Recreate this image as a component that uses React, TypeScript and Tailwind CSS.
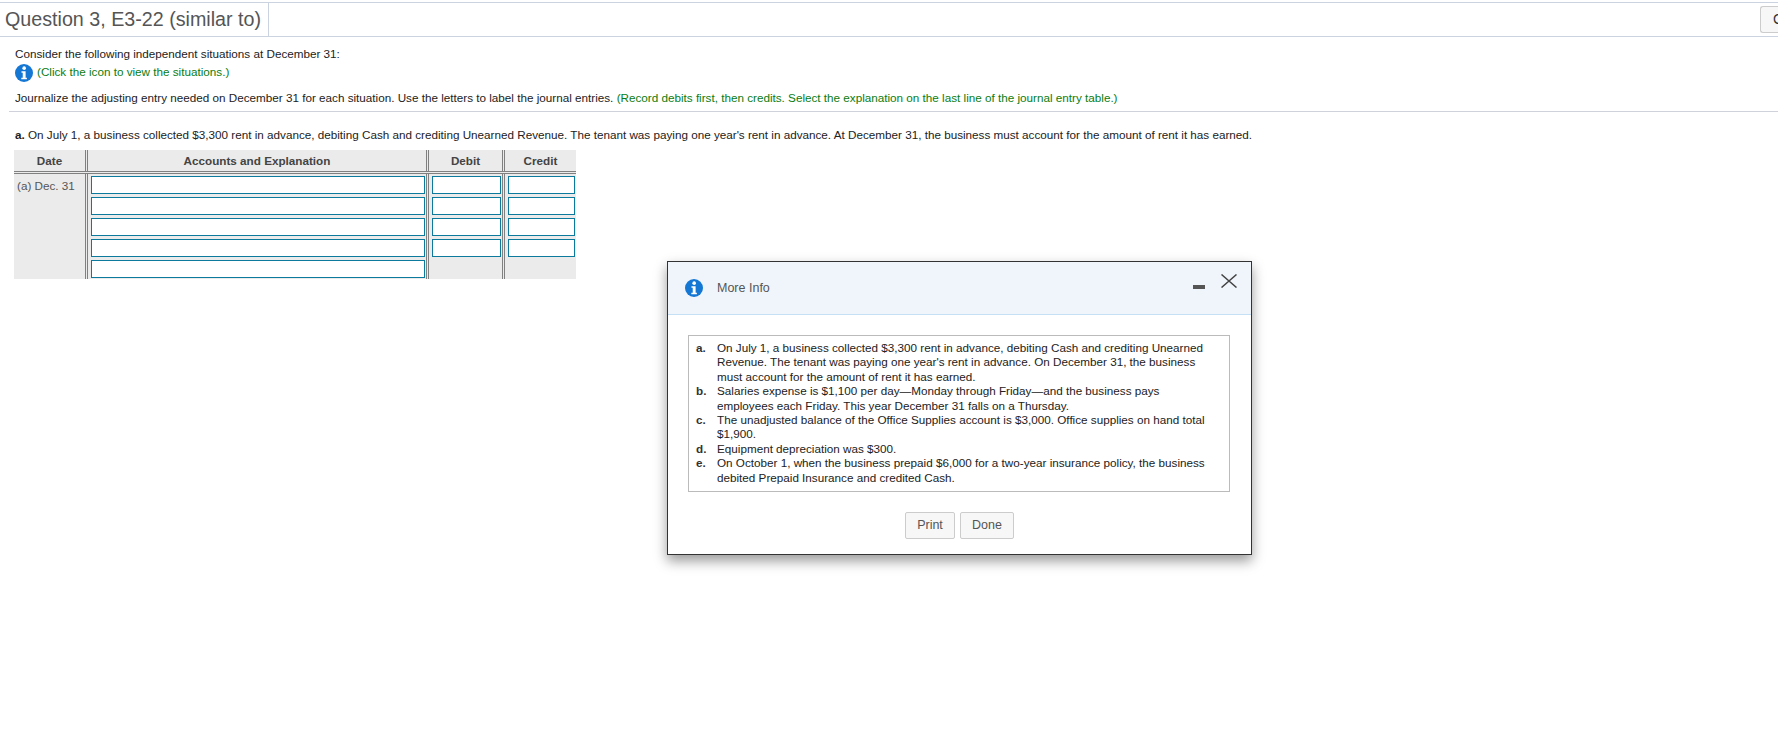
import React from 'react';

const font = { fontFamily: '"Liberation Sans", Arial, sans-serif' };

function InfoIcon({ size }: { size: number }) {
  return (
    <svg width={size} height={size} viewBox="0 0 20 20" className="shrink-0">
      <circle cx="10" cy="10" r="10" fill="#1477d4" />
      <circle cx="10.2" cy="4.6" r="2" fill="#fff" />
      <path d="M7.2 8h4.6v7.4h1.4V17H7v-1.6h1.6V9.6H7.2z" fill="#fff" />
    </svg>
  );
}

const rows = [0, 1, 2, 3, 4];

function Field({ className }: { className: string }) {
  return <div className={`h-[18px] border border-[#0b7a9c] bg-white ${className}`} />;
}

function JournalTable() {
  return (
    <div className="ml-[14px] mt-[8px] w-[562px] bg-[#ebebeb] text-[11.7px] text-[#444]">
      <div className="flex h-[24px] border-b-[3px] border-double border-[#808080] font-bold">
        <div className="flex w-[74px] items-center justify-center border-r-[3px] border-double border-[#808080]">Date</div>
        <div className="flex w-[341px] items-center justify-center border-r-[3px] border-double border-[#808080] pt-px">Accounts and Explanation</div>
        <div className="flex w-[76px] items-center justify-center border-r-[3px] border-double border-[#808080] pt-px">Debit</div>
        <div className="flex flex-1 items-center justify-center pt-px">Credit</div>
      </div>
      <div className="flex">
        <div className="w-[74px] border-r-[3px] border-double border-[#808080] pl-[3px] pt-[3px] text-[#555]">(a) Dec. 31</div>
        <div className="flex w-[341px] flex-col gap-[3px] border-r-[3px] border-double border-[#808080] pl-[3px] pt-[2px] pb-px">
          {rows.map((r) => (
            <Field key={r} className="w-[334px]" />
          ))}
        </div>
        <div className="flex w-[76px] flex-col gap-[3px] border-r-[3px] border-double border-[#808080] pl-[3px] pt-[2px]">
          {rows.slice(0, 4).map((r) => (
            <Field key={r} className="w-[69px]" />
          ))}
        </div>
        <div className="flex flex-1 flex-col gap-[3px] pl-[3px] pt-[2px]">
          {rows.slice(0, 4).map((r) => (
            <Field key={r} className="w-[67px]" />
          ))}
        </div>
      </div>
    </div>
  );
}

const info: [string, string[]][] = [
  ['a.', ['On July 1, a business collected $3,300 rent in advance, debiting Cash and crediting Unearned', "Revenue. The tenant was paying one year's rent in advance. On December 31, the business", 'must account for the amount of rent it has earned.']],
  ['b.', ['Salaries expense is $1,100 per day\u2014Monday through Friday\u2014and the business pays', 'employees each Friday. This year December 31 falls on a Thursday.']],
  ['c.', ['The unadjusted balance of the Office Supplies account is $3,000. Office supplies on hand total', '$1,900.']],
  ['d.', ['Equipment depreciation was $300.']],
  ['e.', ['On October 1, when the business prepaid $6,000 for a two-year insurance policy, the business', 'debited Prepaid Insurance and credited Cash.']],
];

function MoreInfo() {
  return (
    <div className="absolute left-[667px] top-[261px] h-[294px] w-[585px] border border-[#333] bg-white shadow-[0_6px_12px_rgba(0,0,0,0.4)]">
      <div className="flex h-[53px] items-center border-b border-[#c5e0f5] bg-[#f0f5fc] pl-[17px] pr-[14px]">
        <InfoIcon size={18} />
        <span className="ml-[14px] text-[12.5px] text-[#555]">More Info</span>
        <div className="ml-auto flex items-start self-start pt-[12px]">
          <div className="mt-[11px] h-[4px] w-[12px] bg-[#555]" />
          <svg width="16" height="14" viewBox="0 0 16 14" className="ml-[16px]">
            <path d="M0.5 0.5l15 13M15.5 0.5l-15 13" stroke="#444" strokeWidth="1.5" fill="none" />
          </svg>
        </div>
      </div>
      <div className="ml-[20px] mr-[21px] mt-[20px] border border-[#bbb] px-[6px] pb-[6px] pt-[5px] text-[11.7px] leading-[14.4px] text-[#222]">
        {info.map(([letter, lines]) => (
          <div key={letter} className="flex">
            <span className="w-[22px] shrink-0 pl-px font-bold text-[#333]">{letter}</span>
            <div>
              {lines.map((line) => (
                <div key={line} className="whitespace-nowrap">{line}</div>
              ))}
            </div>
          </div>
        ))}
      </div>
      <div className="mt-[20px] flex justify-center gap-[5px] text-[12.5px] text-[#555]">
        <div className="flex h-[27px] w-[50px] items-center justify-center rounded-[2px] border border-[#ccc] bg-[#f7f7f7]">Print</div>
        <div className="flex h-[27px] w-[54px] items-center justify-center rounded-[2px] border border-[#ccc] bg-[#f7f7f7]">Done</div>
      </div>
    </div>
  );
}

export default function App() {
  return (
    <div className="relative h-[736px] w-[1778px] overflow-hidden bg-white pt-[2px]" style={font}>
      <div className="flex h-[35px] items-center justify-between border-y border-[#cbd2e0]">
        <div className="flex h-full items-center border-r border-[#cbd2e0] pl-[5px] pr-[7px] text-[19.7px] text-[#555]">
          Question 3, E3-22 (similar to)
        </div>
        <div className="h-[27px] w-[18px] overflow-hidden rounded-l-[3px] border-y border-l border-[#ccc] bg-[#f7f7f7] pl-[12px] text-[14px] leading-[25px] text-[#333]">C</div>
      </div>
      <div className="pl-[15px] pt-[10px] text-[11.7px] leading-[14px] text-[#222]">
        <p>Consider the following independent situations at December 31:</p>
        <p className="mt-[3px] flex items-center text-[#0a7d12]">
          <span className="mr-[4px]"><InfoIcon size={18} /></span>
          <span className="mb-[2px]">(Click the icon to view the situations.)</span>
        </p>
        <p className="mt-[9px]">
          Journalize the adjusting entry needed on December 31 for each situation. Use the letters to label the journal entries.{' '}
          <span className="text-[#0a7d12]">(Record debits first, then credits. Select the explanation on the last line of the journal entry table.)</span>
        </p>
      </div>
      <div className="ml-[9px] mt-[6px] border-t border-[#cfd2da]" />
      <p className="ml-[15px] mt-[16px] text-[11.7px] leading-[14px] text-[#222]">
        <b>a.</b> On July 1, a business collected $3,300 rent in advance, debiting Cash and crediting Unearned Revenue. The tenant was paying one year's rent in advance. At December 31, the business must account for the amount of rent it has earned.
      </p>
      <JournalTable />
      <MoreInfo />
    </div>
  );
}
